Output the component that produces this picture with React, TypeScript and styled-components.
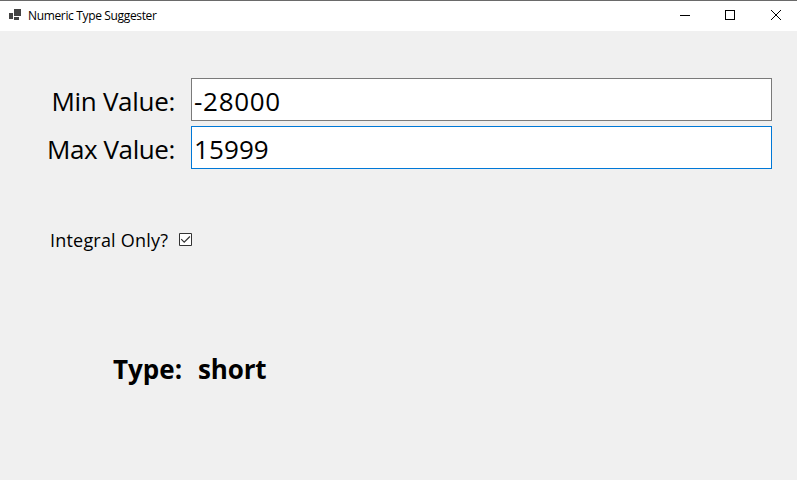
import React from "react";
import styled, { createGlobalStyle } from "styled-components";

const GlobalStyle = createGlobalStyle`
  *, *::before, *::after { box-sizing: border-box; }
  body { margin: 0; background: #f0f0f0; overflow: hidden; }
`;

const Window = styled.div`
  width: 797px;
  height: 480px;
  display: flex;
  flex-direction: column;
  background: #f0f0f0;
  color: #000;
  font-family: "Open Sans", "Noto Sans", sans-serif;
  white-space: nowrap;
`;

const TitleBar = styled.header`
  height: 31px;
  flex: none;
  display: flex;
  align-items: center;
  background: #fff;
  border-top: 1px solid #6a6a6a;
`;

const AppIcon = styled.svg`
  width: 28px;
  height: 30px;
  flex: none;
`;

const Title = styled.h1`
  margin: 0;
  flex: 1;
  font-size: 12px;
  line-height: 30px;
  font-weight: 400;
  letter-spacing: -0.35px;
`;

const CaptionButton = styled.button`
  width: 46px;
  height: 30px;
  padding: 0;
  border: 0;
  background: transparent;
  display: block;

  svg { display: block; }
`;

const Form = styled.main`
  display: flex;
  flex-direction: column;
  padding: 47px 25px 0 0;
`;

const Fields = styled.div`
  display: grid;
  grid-template-columns: 191px 1fr;
  grid-auto-rows: 43px;
  row-gap: 5px;
`;

const FieldLabel = styled.label<{ $spacing: number }>`
  padding: 2px 16px 0 0;
  font-size: 26px;
  line-height: 43px;
  text-align: right;
  letter-spacing: ${(p) => p.$spacing}px;
`;

const TextBox = styled.input<{ $focused?: boolean; $spacing: number }>`
  width: 100%;
  height: 43px;
  padding: 3px 3px 0 2px;
  border: 1px solid ${(p) => (p.$focused ? "#0078d7" : "#7a7a7a")};
  border-radius: 0;
  outline: none;
  background: #fff;
  color: #000;
  font: 26px "Open Sans", "Noto Sans", sans-serif;
  letter-spacing: ${(p) => p.$spacing}px;
`;

const CheckRow = styled.label`
  display: flex;
  align-items: center;
  height: 26px;
  margin: 58px 0 0 50px;
  font-size: 18px;
  letter-spacing: 0.2px;
`;

const CheckText = styled.span`
  width: 129px;
`;

const CheckBox = styled.svg`
  width: 13px;
  height: 13px;
  margin-bottom: 1px;
`;

const Result = styled.div`
  display: flex;
  height: 40px;
  margin: 96px 0 0 113px;
  font-size: 26px;
  line-height: 40px;
  font-weight: 700;
`;

const ResultLabel = styled.span`
  width: 85px;
`;

const ResultValue = styled.output`
  letter-spacing: -0.15px;
`;

export default function App() {
  return (
    <Window>
      <GlobalStyle />
      <TitleBar>
        <AppIcon viewBox="0 0 28 30" shapeRendering="crispEdges" fill="#424242">
          <path d="M9 12h4v6H9zM14 8h7v7h-7zM14 16h5v3h-5z" />
        </AppIcon>
        <Title>Numeric Type Suggester</Title>
        <CaptionButton aria-label="Minimize">
          <svg width="46" height="30" shapeRendering="crispEdges">
            <path d="M21 14h10v1H21z" />
          </svg>
        </CaptionButton>
        <CaptionButton aria-label="Maximize">
          <svg width="46" height="30" shapeRendering="crispEdges">
            <path d="M20.5 9.5h9v9h-9z" fill="none" stroke="#000" />
          </svg>
        </CaptionButton>
        <CaptionButton aria-label="Close">
          <svg width="46" height="30">
            <path d="M20 9l10 10M30 9L20 19" fill="none" stroke="#000" strokeWidth="1" />
          </svg>
        </CaptionButton>
      </TitleBar>
      <Form>
        <Fields>
          <FieldLabel htmlFor="min" $spacing={-0.3}>Min Value:</FieldLabel>
          <TextBox id="min" defaultValue="-28000" $spacing={0.7} />
          <FieldLabel htmlFor="max" $spacing={-0.4}>Max Value:</FieldLabel>
          <TextBox id="max" defaultValue="15999" $spacing={0.1} $focused />
        </Fields>
        <CheckRow>
          <CheckText>Integral Only?</CheckText>
          <CheckBox viewBox="0 0 13 13" role="checkbox" aria-checked="true">
            <path d="M.5.5h12v12H.5z" fill="#fff" stroke="#333" />
            <path d="M2.2 6.2l3 3 5.7-5.7" fill="none" stroke="#333" strokeWidth="1.2" />
          </CheckBox>
        </CheckRow>
        <Result>
          <ResultLabel>Type:</ResultLabel>
          <ResultValue>short</ResultValue>
        </Result>
      </Form>
    </Window>
  );
}
